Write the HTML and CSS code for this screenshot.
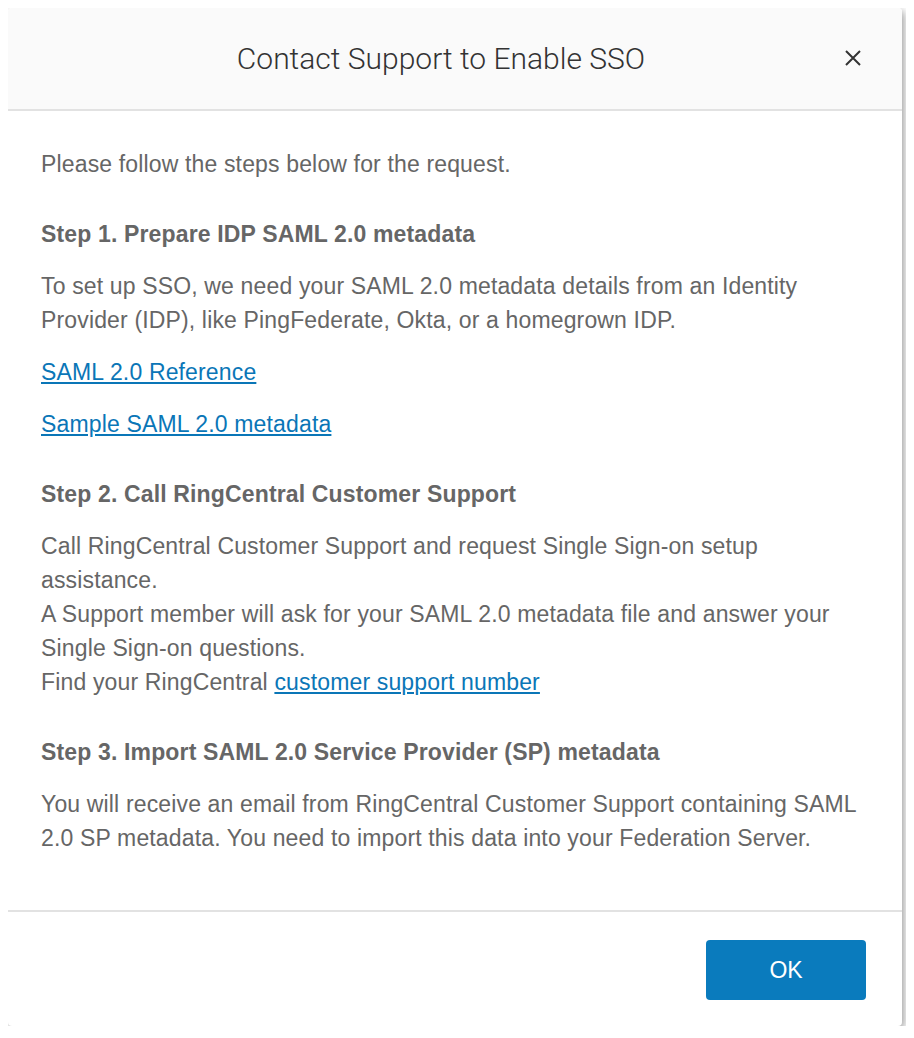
FILE: index.html
```html
<!DOCTYPE html>
<html>
  <head>
    <title>Contact Support to Enable SSO</title>
    <link rel="stylesheet" href="styles.css">
  </head>
  <body>
    <div class="modal">
      <div class="modal-header">
        <h2 class="modal-title">Contact Support to Enable SSO</h2>
        <button class="close-button" aria-label="Close">
          <svg width="18" height="18" viewBox="0 0 18 18">
            <path d="M2 2 L16 16 M16 2 L2 16" stroke="#333" stroke-width="2" fill="none"/>
          </svg>
        </button>
      </div>

      <div class="modal-body">
        <p>Please follow the steps below for the request.</p>

        <h3 class="step-title">Step 1. Prepare IDP SAML 2.0 metadata</h3>
        <p>To set up SSO, we need your SAML 2.0 metadata details from an Identity Provider (IDP), like PingFederate, Okta, or a homegrown IDP.</p>
        <p><a href="#">SAML 2.0 Reference</a></p>
        <p><a href="#">Sample SAML 2.0 metadata</a></p>

        <h3 class="step-title">Step 2. Call RingCentral Customer Support</h3>
        <p>Call RingCentral Customer Support and request Single Sign-on setup assistance.<br>
          A Support member will ask for your SAML 2.0 metadata file and answer your Single Sign-on questions.<br>
          Find your RingCentral <a href="#">customer support number</a></p>

        <h3 class="step-title">Step 3. Import SAML 2.0 Service Provider (SP) metadata</h3>
        <p>You will receive an email from RingCentral Customer Support containing SAML 2.0 SP metadata. You need to import this data into your Federation Server.</p>
      </div>

      <div class="modal-footer">
        <button class="ok-button">OK</button>
      </div>
    </div>
  </body>
</html>
```

FILE: styles.css
```css
body{
  margin: 8px;
  background-color: white;
  font-family: "Liberation Sans", Arial, Helvetica, sans-serif;
}

.modal{
  width: 894px;
  height: 1018px;
  background-color: white;
  border-radius: 4px;
  box-shadow: 2px 3px 9px rgba(0, 0, 0, 0.4);
  display: flex;
  flex-direction: column;
  overflow: hidden;
}

.modal-header{
  height: 101px;
  background-color: #fafafa;
  border-bottom: 2px solid #e2e2e2;
  display: flex;
  align-items: center;
  justify-content: center;
  position: relative;
  padding-right: 28px;
}

.modal-title{
  margin: 0;
  font-family: Roboto, "Liberation Sans", sans-serif;
  font-size: 30px;
  font-weight: 300;
  color: #333;
}

.close-button{
  position: absolute;
  right: 40px;
  top: 41px;
  width: 18px;
  height: 18px;
  padding: 0;
  border: none;
  background: transparent;
  cursor: pointer;
}

.modal-body{
  flex: 1;
  padding: 36px 33px 0 33px;
  color: #666;
  font-size: 23px;
  letter-spacing: 0.15px;
  line-height: 34px;
}

.modal-body p{
  margin: 0 0 18px 0;
}

.step-title{
  margin: 36px 0 18px 0;
  font-size: 23px;
  font-weight: bold;
  line-height: 34px;
}

.modal-body a{
  color: #0a76b7;
  text-decoration: underline;
}

.modal-footer{
  border-top: 2px solid #e2e2e2;
  height: 116px;
  display: flex;
  justify-content: flex-end;
  align-items: flex-start;
  padding: 28px 36px 0 0;
  box-sizing: border-box;
}

.ok-button{
  width: 160px;
  height: 60px;
  background-color: #0a7bbd;
  color: white;
  border: none;
  border-radius: 4px;
  font-family: "Liberation Sans", Arial, sans-serif;
  font-size: 23px;
  cursor: pointer;
}
```
